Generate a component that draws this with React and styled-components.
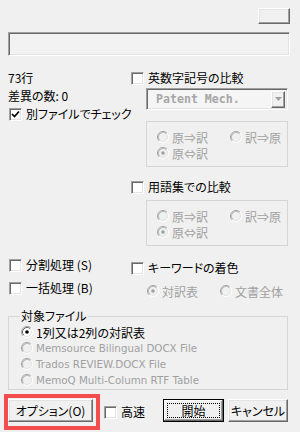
import React from 'react';
import styled, { createGlobalStyle, css } from 'styled-components';

const GlobalStyle = createGlobalStyle`
  html, body {
    margin: 0;
    padding: 0;
    background: #f0f0f0;
  }
  body {
    font-family: "Noto Sans CJK JP", "Noto Sans", sans-serif;
    font-size: 12px;
    color: #000;
    font-feature-settings: "palt";
  }
  * {
    box-sizing: border-box;
  }
`;

// classic raised / sunken 3D edges
const raised = css`
  background: #f0f0f0;
  border: 1px solid;
  border-color: #fff #696969 #696969 #fff;
  box-shadow: inset -1px -1px #a0a0a0, inset 1px 1px #e3e3e3;
`;

const sunken = css`
  border: 1px solid;
  border-color: #a0a0a0 #fff #fff #a0a0a0;
  box-shadow: inset 1px 1px #696969, inset -1px -1px #e3e3e3;
`;

const Dialog = styled.div`
  width: 300px;
  height: 432px;
  padding: 8px 12px 0 8px;
  display: flex;
  flex-direction: column;
  background: #f0f0f0;
`;

const TopBar = styled.div`
  display: flex;
  justify-content: flex-end;
  margin-right: -2px;
`;

const SmallButton = styled.div`
  ${raised};
  width: 32px;
  height: 16px;
`;

const Progress = styled.div`
  ${sunken};
  margin-top: 8px;
  margin-right: -2px;
  height: 24px;
  background: #f2f2f2;
`;

const Columns = styled.div`
  display: grid;
  grid-template-columns: 123px 1fr;
  margin-top: ${(p) => p.$top}px;
`;

const Column = styled.div`
  display: flex;
  flex-direction: column;
  padding-top: ${(p) => p.$pad || 0}px;
  gap: ${(p) => p.$gap || 0}px;
`;

const TextRow = styled.div`
  height: 18px;
  line-height: 18px;
  white-space: nowrap;
`;

const CheckRow = styled.label`
  display: flex;
  align-items: center;
  gap: 4px;
  height: 18px;
  line-height: 18px;
  white-space: nowrap;
  margin-left: ${(p) => p.$indent || 0}px;
  margin-top: ${(p) => p.$top || 0}px;
`;

const Box = styled.span`
  ${sunken};
  width: 13px;
  height: 13px;
  background: #fff;
  display: inline-flex;
  align-items: center;
  justify-content: center;
  flex: none;
`;

const Combo = styled.div`
  ${sunken};
  margin: 1px 0 0 15px;
  height: 22px;
  background: #f5f5f5;
  display: flex;
  align-items: center;
  padding: 2px 2px 2px 9px;
`;

const ComboText = styled.span`
  flex: 1;
  font-family: "DejaVu Sans Mono", "Liberation Mono", monospace;
  font-weight: bold;
  font-size: 11.6px;
  color: #a6a6a6;
`;

const ComboArrow = styled.span`
  ${raised};
  width: 14px;
  height: 17px;
  display: flex;
  align-items: center;
  justify-content: center;
`;

const Group = styled.div`
  border: 1px solid #d5d5d5;
  height: 46px;
  margin: ${(p) => p.$top}px 0 0 15px;
  padding: 7px 0 0 10px;
  display: grid;
  grid-template-columns: 73px auto;
  grid-auto-rows: 16px;
`;

const RadioGrid = styled.div`
  display: grid;
  grid-template-columns: 73px auto;
  padding-left: 16px;
  height: 18px;
`;

const RadioItem = styled.div`
  display: flex;
  align-items: center;
  gap: 3px;
  height: ${(p) => p.$h || 16}px;
  white-space: nowrap;
  color: ${(p) => (p.$disabled ? '#a0a0a0' : '#000')};
  font-family: ${(p) =>
    p.$latin
      ? '"DejaVu Sans", "Noto Sans", sans-serif'
      : '"Noto Sans CJK JP", "Noto Sans", sans-serif'};
  font-size: ${(p) => (p.$latin ? '10.3px' : '12px')};
`;

const RadioSvg = styled.svg`
  flex: none;
  display: block;
`;

const Fieldset = styled.fieldset`
  margin: 9px 0 0 0;
  padding: 1px 0 1px 12px;
  border: 1px solid #d5d5d5;
  min-width: 0;
`;

const Legend = styled.legend`
  padding: 0 1px;
  line-height: 14px;
  height: 14px;
  margin-left: -1px;
`;

const BottomBar = styled.div`
  display: flex;
  align-items: flex-start;
  margin-top: 4px;
`;

const Highlight = styled.div`
  margin-left: -4px;
  border: 4px solid #f24c4c;
  padding: 1px 3px 4px 0;
`;

const Button = styled.button`
  ${raised};
  font: inherit;
  color: #000;
  width: ${(p) => p.$w}px;
  height: 23px;
  padding: 0;
  line-height: 20px;
  margin-top: ${(p) => p.$top || 0}px;
  margin-left: ${(p) => p.$left || 0};
  position: relative;
  ${(p) =>
    p.$default &&
    css`
      border: 1px solid #000;
      box-shadow: inset -1px -1px #696969, inset 1px 1px #fff,
        inset -2px -2px #a0a0a0;
      &::after {
        content: '';
        position: absolute;
        inset: 3px;
        border: 1px dotted #000;
      }
    `}
`;

const Check = () => (
  <svg width="9" height="9" viewBox="0 0 9 9">
    <path d="M1 4 L3.5 6.5 L8 1.5" stroke="#000" strokeWidth="1.7" fill="none" />
  </svg>
);

function CheckBox({ checked, children, ...rest }) {
  return (
    <CheckRow {...rest}>
      <Box>{checked && <Check />}</Box>
      <span>{children}</span>
    </CheckRow>
  );
}

function Radio({ checked, disabled }) {
  return (
    <RadioSvg width="12" height="12" viewBox="0 0 12 12">
      <circle cx="6" cy="6" r="5" fill={disabled ? '#f0f0f0' : '#fff'} />
      <path d="M2.11 9.89 A5.5 5.5 0 0 1 9.89 2.11" stroke="#a0a0a0" fill="none" />
      <path d="M9.89 2.11 A5.5 5.5 0 0 1 2.11 9.89" stroke="#fff" fill="none" />
      <path
        d="M2.82 9.18 A4.5 4.5 0 0 1 9.18 2.82"
        stroke={disabled ? '#b9b9b9' : '#696969'}
        fill="none"
      />
      <path d="M9.18 2.82 A4.5 4.5 0 0 1 2.82 9.18" stroke="#e3e3e3" fill="none" />
      {checked && <circle cx="6" cy="6" r="1.8" fill={disabled ? '#a0a0a0' : '#000'} />}
    </RadioSvg>
  );
}

function Option({ checked, disabled, latin, h, children }) {
  return (
    <RadioItem $disabled={disabled} $latin={latin} $h={h}>
      <Radio checked={checked} disabled={disabled} />
      <span>{children}</span>
    </RadioItem>
  );
}

function DirectionGroup({ top }) {
  return (
    <Group $top={top}>
      <Option disabled>原⇒訳</Option>
      <Option disabled>訳⇒原</Option>
      <Option disabled checked>原⇔訳</Option>
    </Group>
  );
}

export default function App() {
  return (
    <Dialog>
      <GlobalStyle />
      <TopBar>
        <SmallButton />
      </TopBar>
      <Progress />

      <Columns $top={13}>
        <Column>
          <TextRow>73行</TextRow>
          <TextRow>差異の数: 0</TextRow>
          <CheckBox checked $indent={1}>別ファイルでチェック</CheckBox>
        </Column>
        <Column>
          <CheckBox>英数字記号の比較</CheckBox>
          <Combo>
            <ComboText>Patent Mech.</ComboText>
            <ComboArrow>
              <svg width="7" height="4" viewBox="0 0 7 4">
                <path d="M0 0 H7 L3.5 4 Z" fill="#a0a0a0" />
              </svg>
            </ComboArrow>
          </Combo>
          <DirectionGroup top={11} />
          <CheckBox $top={11}>用語集での比較</CheckBox>
          <DirectionGroup top={4} />
        </Column>
      </Columns>

      <Columns $top={10}>
        <Column $gap={5}>
          <CheckBox $indent={1}>分割処理 (S)</CheckBox>
          <CheckBox $indent={1}>一括処理 (B)</CheckBox>
        </Column>
        <Column $pad={3} $gap={5}>
          <CheckBox>キーワードの着色</CheckBox>
          <RadioGrid>
            <Option disabled checked h={18}>対訳表</Option>
            <Option disabled h={18}>文書全体</Option>
          </RadioGrid>
        </Column>
      </Columns>

      <Fieldset>
        <Legend>対象ファイル</Legend>
        <Option checked>1列又は2列の対訳表</Option>
        <Option disabled latin>Memsource Bilingual DOCX File</Option>
        <Option disabled latin>Trados REVIEW.DOCX File</Option>
        <Option disabled latin>MemoQ Multi-Column RTF Table</Option>
      </Fieldset>

      <BottomBar>
        <Highlight>
          <Button $w={85}>オプション(O)</Button>
        </Highlight>
        <CheckBox $indent={4} $top={9}>高速</CheckBox>
        <Button $w={61} $top={5} $left="auto" $default>
          開始
        </Button>
        <Button $w={60} $top={5} $left="4px">
          キャンセル
        </Button>
      </BottomBar>
    </Dialog>
  );
}
